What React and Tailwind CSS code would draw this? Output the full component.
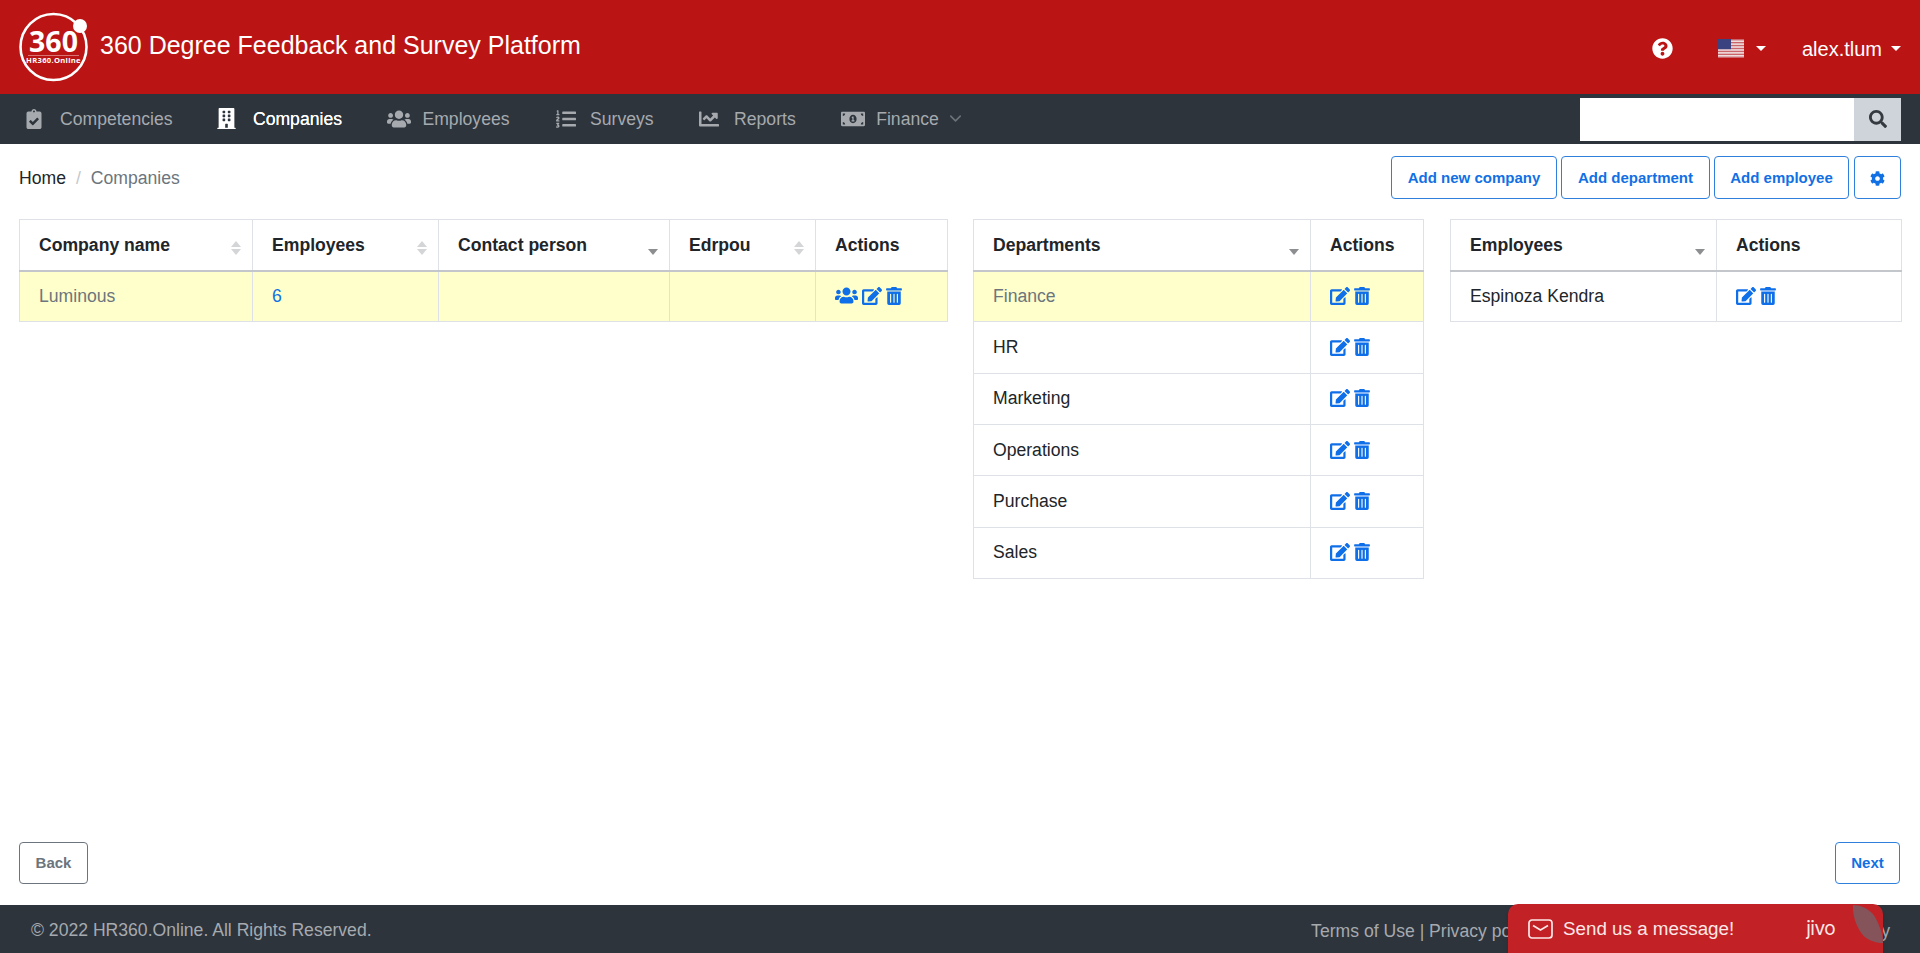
import React from "react";
import { FaClipboardCheck, FaBuilding, FaUsers, FaListOl, FaChartLine, FaMoneyBillAlt, FaQuestionCircle, FaSearch, FaCog, FaEdit, FaTrashAlt } from "react-icons/fa";
import { FiChevronDown } from "react-icons/fi";

function Logo() {
  return (
    <svg width="72" height="72" viewBox="0 0 72 72" className="shrink-0">
      <circle cx="35.5" cy="36" r="33" fill="none" stroke="#fff" strokeWidth="2.6" />
      <circle cx="62" cy="15" r="7" fill="#fff" />
      <text x="35.5" y="41" textAnchor="middle" fill="#fff" fontFamily="'Open Sans', sans-serif" fontWeight="700" fontSize="28.5">360</text>
      <line x1="10" y1="44.5" x2="61" y2="44.5" stroke="#fff" strokeOpacity="0.6" strokeWidth="0.7" />
      <text x="35.5" y="52" textAnchor="middle" fill="#fff" fontFamily="'Open Sans', sans-serif" fontWeight="700" fontSize="7.6" letterSpacing="0.3">HR360.Online</text>
    </svg>
  );
}

function Flag() {
  const stripes = [];
  for (let i = 0; i < 7; i++) stripes.push(<rect key={i} x="0" y={(i * 2 * 19) / 13} width="26" height={19 / 13} fill="#c9656b" />);
  return (
    <svg width="26" height="19" viewBox="0 0 26 19">
      <rect width="26" height="19" fill="#f3e9e9" />
      {stripes}
      <rect width="13" height="10.2" fill="#3a4380" />
    </svg>
  );
}

function Caret({ className }) {
  return <span className={"inline-block w-0 h-0 border-x-[5px] border-x-transparent border-t-[5px] border-t-white " + className} />;
}

function SortBoth() {
  return (
    <span className="absolute right-[11px] top-[21px] flex flex-col gap-[2px]">
      <span className="w-0 h-0 border-x-[5px] border-x-transparent border-b-[6px] border-b-[#d4d5d6]" />
      <span className="w-0 h-0 border-x-[5px] border-x-transparent border-t-[6px] border-t-[#d4d5d6]" />
    </span>
  );
}
function SortDown() {
  return (
    <span className="absolute right-[11px] top-[29px]">
      <span className="block w-0 h-0 border-x-[5px] border-x-transparent border-t-[6px] border-t-[#8c8e90]" />
    </span>
  );
}

function Th({ w, children, sort }) {
  return (
    <th style={{ width: w }} className="relative h-[51px] border border-[#dee2e6] border-b-2 border-b-[#c3c7cb] pl-[19px] pr-[19px] pt-[1px] text-left align-middle font-bold text-[17.6px] text-[#212529]">
      {children}
      {sort === "both" && <SortBoth />}
      {sort === "down" && <SortDown />}
    </th>
  );
}

function Td({ children, className = "" }) {
  return <td className={"h-[51.35px] border border-[#dee2e6] px-[19px] pb-[1px] align-middle text-[17.6px] " + className}>{children}</td>;
}

function Actions({ users }) {
  return (
    <span className="flex items-center text-[#0f6fe8]">
      {users && <FaUsers size={23} className="mr-[4px]" />}
      <FaEdit size={20} className="mr-[3px]" />
      <FaTrashAlt size={18} />
    </span>
  );
}

const nav = [
  { icon: FaClipboardCheck, size: 20, t: "Competencies", shift: "" },
  { icon: FaBuilding, size: 21, t: "Companies", active: true, shift: "" },
  { icon: FaUsers, size: 24, t: "Employees", shift: "translate-x-[3px]" },
  { icon: FaListOl, size: 20, t: "Surveys", shift: "translate-x-[2px]" },
  { icon: FaChartLine, size: 20, t: "Reports", shift: "translate-x-[1px]" },
  { icon: FaMoneyBillAlt, size: 24, t: "Finance", chevron: true, shift: "translate-x-[3px]" },
];

const departments = ["Finance", "HR", "Marketing", "Operations", "Purchase", "Sales"];

function Btn({ children, className = "" }) {
  return <button className={"h-[43px] pt-[1px] rounded-[4px] border border-[#2f7fdc] bg-white text-[#1170e4] font-bold text-[15px] flex items-center justify-center " + className}>{children}</button>;
}

export default function App() {
  return (
    <div className="relative h-[953px] flex flex-col overflow-hidden bg-white font-['Liberation_Sans',Arial,sans-serif] text-[17.6px] text-[#212529]">
      <header className="h-[94px] shrink-0 bg-[#bb1414] flex items-center pl-[18px] text-white">
        <Logo />
        <span className="ml-[10px] mb-[2px] text-[25px]">360 Degree Feedback and Survey Platform</span>
        <div className="ml-auto flex items-center pr-[19px] pt-[3px]">
          <FaQuestionCircle size={21} className="mr-[45px]" />
          <Flag />
          <Caret className="ml-[12px] mr-[36px]" />
          <span className="text-[20px]">alex.tlum</span>
          <Caret className="ml-[9px]" />
        </div>
      </header>
      <nav className="h-[50px] shrink-0 bg-[#2d343c] flex items-center pl-[22px] pr-[19px]">
        <div className="flex items-center gap-[42.5px]">
          {nav.map((n) => {
            const I = n.icon;
            return (
              <div key={n.t} className={"flex items-center " + (n.active ? "text-white [text-shadow:0_0_0.6px_#fff]" : "text-[#a6aaaf]")}>
                <span className={"w-[24px] mr-[14px] flex items-center justify-center " + n.shift}><I size={n.size} /></span>
                <span>{n.t}</span>
                {n.chevron && <FiChevronDown size={19} className="ml-[7px] text-[#6d7378]" />}
              </div>
            );
          })}
        </div>
        <div className="ml-auto flex h-[43px] w-[321px]">
          <div className="flex-1 bg-white" />
          <div className="w-[47px] bg-[#ced4da] flex items-center justify-center text-[#343a40]">
            <FaSearch size={18} />
          </div>
        </div>
      </nav>
      <main className="flex-1 flex flex-col px-[19px] pt-[12px] pb-[21px]">
        <div className="flex items-center justify-between">
          <div className="flex items-center pt-[1px]">
            <span>Home</span>
            <span className="ml-[10px] mr-[10px] text-[#c4c8cc]">/</span>
            <span className="text-[#6c757d]">Companies</span>
          </div>
          <div className="flex gap-[4px]">
            <Btn className="w-[166px]">Add new company</Btn>
            <Btn className="w-[149px]">Add department</Btn>
            <Btn className="w-[135px] mr-[1px]">Add employee</Btn>
            <Btn className="w-[47px]"><FaCog size={15} /></Btn>
          </div>
        </div>
        <div className="flex items-start mt-[20px]">
          <table className="table-fixed border-collapse w-[928px]">
            <thead>
              <tr>
                <Th w={233} sort="both">Company name</Th>
                <Th w={186} sort="both">Employees</Th>
                <Th w={231} sort="down">Contact person</Th>
                <Th w={146} sort="both">Edrpou</Th>
                <Th w={132}>Actions</Th>
              </tr>
            </thead>
            <tbody>
              <tr className="bg-[#feffca]">
                <Td className="text-[#6c757d]">Luminous</Td>
                <Td className="text-[#1170e4]">6</Td>
                <Td />
                <Td />
                <Td><Actions users /></Td>
              </tr>
            </tbody>
          </table>
          <table className="table-fixed border-collapse w-[450px] ml-[25px]">
            <thead>
              <tr>
                <Th w={337} sort="down">Departments</Th>
                <Th w={113}>Actions</Th>
              </tr>
            </thead>
            <tbody>
              {departments.map((d, i) => (
                <tr key={d} className={i === 0 ? "bg-[#feffca]" : ""}>
                  <Td className={i === 0 ? "text-[#6c757d]" : ""}>{d}</Td>
                  <Td><Actions /></Td>
                </tr>
              ))}
            </tbody>
          </table>
          <table className="table-fixed border-collapse w-[451px] ml-[26px]">
            <thead>
              <tr>
                <Th w={266} sort="down">Employees</Th>
                <Th w={185}>Actions</Th>
              </tr>
            </thead>
            <tbody>
              <tr>
                <Td>Espinoza Kendra</Td>
                <Td><Actions /></Td>
              </tr>
            </tbody>
          </table>
        </div>
        <div className="mt-auto flex justify-between">
          <button className="h-[42px] w-[69px] rounded-[4px] border border-[#6c757d] bg-white text-[#6c757d] font-bold text-[15px]">Back</button>
          <button className="h-[42px] w-[65px] mr-[1px] rounded-[4px] border border-[#2f7fdc] bg-white text-[#1170e4] font-bold text-[15px]">Next</button>
        </div>
      </main>
      <footer className="h-[48px] shrink-0 bg-[#2d343c] flex items-center justify-between pl-[31px] pr-[30px] text-[#a6aaaf]">
        <span className="mt-[2px]">© 2022 HR360.Online. All Rights Reserved.</span>
        <span className="mt-[5px]">Terms of Use | Privacy policy | Returns and Refund Policy | Cookies Policy</span>
      </footer>
      <div className="absolute left-[1508px] top-[904px] w-[375px] h-[49px] rounded-t-[10px] bg-[#c22126] overflow-hidden flex items-center shadow-md">
        <svg width="25" height="20" viewBox="0 0 25 20" fill="none" stroke="#fde8e8" strokeWidth="1.7" className="ml-[20px]">
          <rect x="1" y="1" width="23" height="18" rx="3" />
          <path d="M5 6.5l7.5 4.5L20 6.5" />
        </svg>
        <span className="ml-[10px] pt-[1px] text-[18.8px] text-[#fde8e8]">Send us a message!</span>
        <span className="ml-[72px] pt-[1px] text-[19px] tracking-[-0.5px] font-['Inter',sans-serif] text-[#fde8e8]">jivo</span>
      </div>
      <svg width="32" height="42" viewBox="0 0 32 42" className="absolute left-[1852px] top-[904px]">
        <path d="M1 1C0 15 8 29 13 33C18 37 25 39 31 39C31 30 28 24 28 24C26 18 23 12 20 9C15 4 8 1 1 1Z" fill="#85535a" />
      </svg>
    </div>
  );
}
